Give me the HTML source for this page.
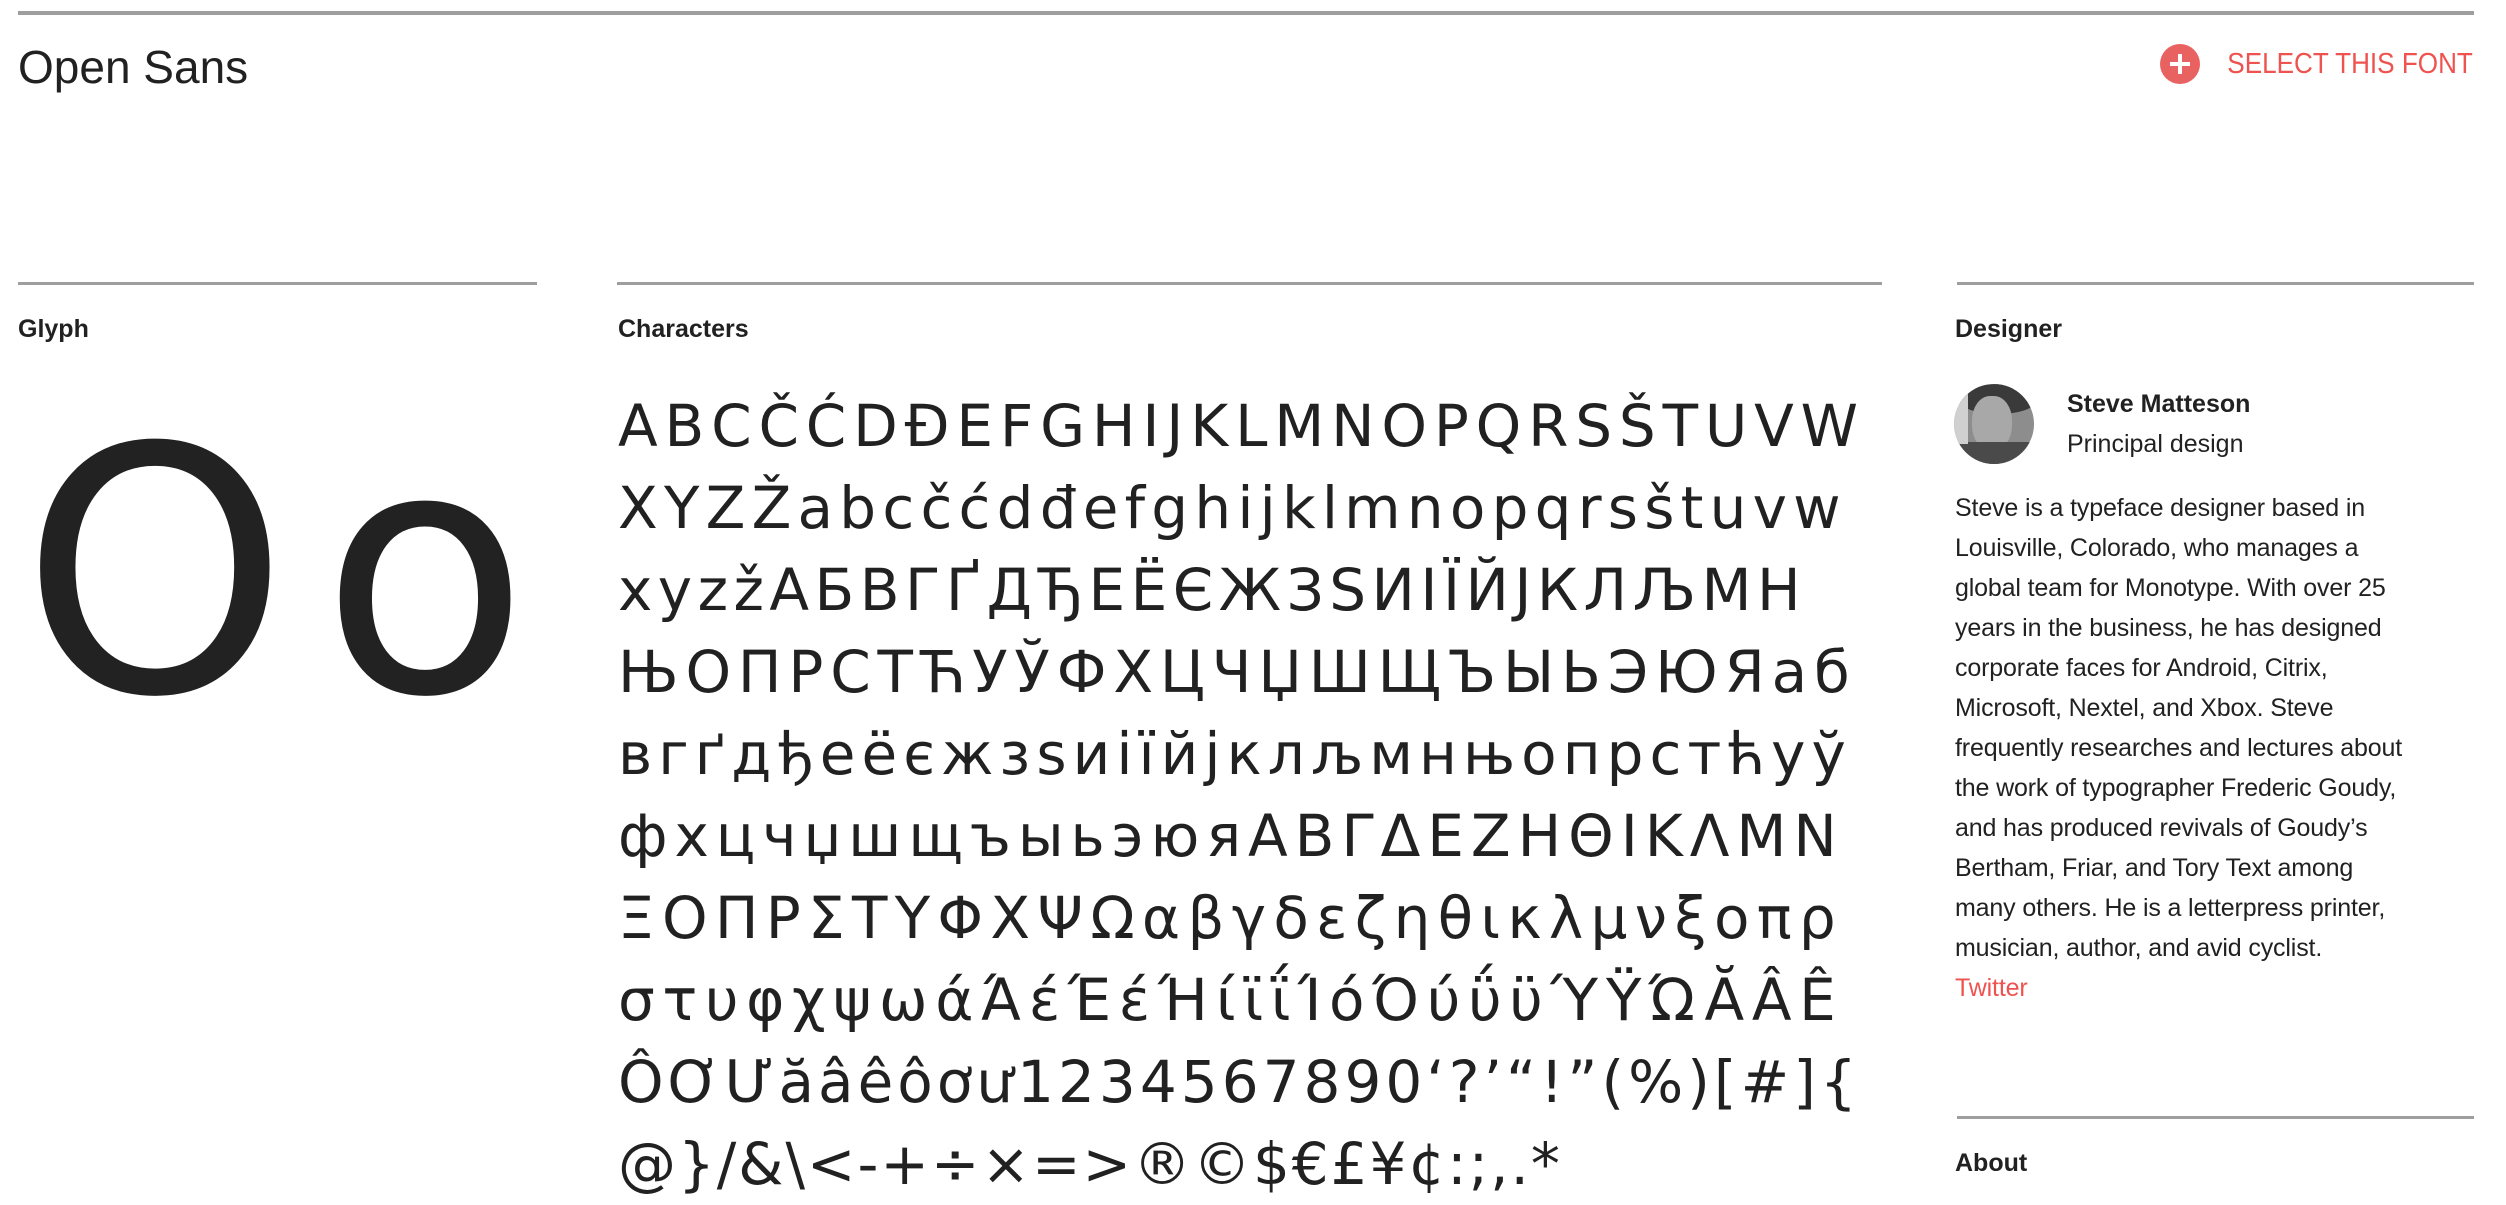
<!DOCTYPE html>
<html><head><meta charset="utf-8">
<style>
html,body{margin:0;padding:0;background:#fff;}
body{width:2506px;height:1202px;position:relative;overflow:hidden;font-family:"Liberation Sans",sans-serif;color:#212121;}
.a{position:absolute;white-space:nowrap;}
.hr{position:absolute;background:#9e9e9e;}
.lbl{font-size:25px;font-weight:bold;line-height:25px;}
.chars{position:absolute;left:618px;top:385px;font-family:"DejaVu Sans",sans-serif;font-size:58px;line-height:82px;color:#212121;}
.chars div{display:flex;justify-content:space-between;height:82px;white-space:nowrap;}
.bio{position:absolute;left:1955px;top:488px;font-size:25px;line-height:40px;white-space:nowrap;color:#212121;letter-spacing:-0.15px;}
.g{position:absolute;font-family:'DejaVu Sans',sans-serif;font-size:340px;line-height:340px;color:#222;top:404px;}
</style></head><body>
<div class="hr" style="left:18px;top:11px;width:2456px;height:4px;"></div>
<div class="a" style="left:18px;top:44px;font-size:46px;line-height:46px;">Open Sans</div>

<svg class="a" style="left:2160px;top:44px" width="40" height="40" viewBox="0 0 40 40"><circle cx="20" cy="20" r="20" fill="#e96262"/><path d="M20 10v20M10 20h20" stroke="#fff" stroke-width="4"/></svg>
<div class="a" style="right:33px;top:50px;font-size:29px;line-height:29px;color:#ef5350;transform:scaleX(0.9);transform-origin:right center;">SELECT THIS FONT</div>

<div class="hr" style="left:18px;top:282px;width:519px;height:3px;"></div>
<div class="hr" style="left:617px;top:282px;width:1265px;height:3px;"></div>
<div class="hr" style="left:1957px;top:282px;width:517px;height:3px;"></div>

<div class="a lbl" style="left:18px;top:317px;">Glyph</div>
<div class="a lbl" style="left:618px;top:317px;">Characters</div>
<div class="a lbl" style="left:1955px;top:317px;">Designer</div>

<div class="g" style="left:21px;">O</div>
<div class="g" style="left:321px;">o</div>

<div class="chars" id="chars"></div>

<div class="a" style="left:1954px;top:384px;width:80px;height:80px;border-radius:50%;overflow:hidden;background:#8d8d8d;">
<div style="position:absolute;left:4px;top:0;width:80px;height:30px;background:#3a3a3a;border-radius:50%;"></div>
<div style="position:absolute;left:18px;top:12px;width:40px;height:54px;background:#a8a8a8;border-radius:45%;"></div>
<div style="position:absolute;left:0;top:58px;width:80px;height:30px;background:#4a4a4a;"></div>
<div style="position:absolute;left:0;top:10px;width:14px;height:50px;background:#d0d0d0;"></div>
</div>
<div class="a" style="left:2067px;top:384px;font-size:25px;line-height:40px;">
<div style="font-weight:bold;">Steve Matteson</div>
<div>Principal design</div>
</div>

<div class="bio">
Steve is a typeface designer based in<br>
Louisville, Colorado, who manages a<br>
global team for Monotype. With over 25<br>
years in the business, he has designed<br>
corporate faces for Android, Citrix,<br>
Microsoft, Nextel, and Xbox. Steve<br>
frequently researches and lectures about<br>
the work of typographer Frederic Goudy,<br>
and has produced revivals of Goudy’s<br>
Bertham, Friar, and Tory Text among<br>
many others. He is a letterpress printer,<br>
musician, author, and avid cyclist.<br>
<span style="color:#ef5350;">Twitter</span>
</div>

<div class="hr" style="left:1957px;top:1116px;width:517px;height:3px;"></div>
<div class="a lbl" style="left:1955px;top:1151px;">About</div>

<script>
var lines=[
["ABCČĆDĐEFGHIJKLMNOPQRSŠTUVW",1858],
["XYZŽabcčćdđefghijklmnopqrsštuvw",1841],
["xyzžАБВГҐДЂЕЁЄЖЗЅИІЇЙЈКЛЉМН",1801],
["ЊОПРСТЋУЎФХЦЧЏШЩЪЫЬЭЮЯаб",1850],
["вгґдђеёєжзѕиіїйјклљмнњопрстћуў",1846],
["фхцчџшщъыьэюяΑΒΓΔΕΖΗΘΙΚΛΜΝ",1837],
["ΞΟΠΡΣΤΥΦΧΨΩαβγδεζηθικλμνξοπρ",1836],
["στυφχψωάΆέΈέΉίϊΐΊόΌύΰϋΎΫΏĂÂÊ",1836],
["ÔƠƯăâêôơư1234567890‘?’“!”(%)[#]{",1857],
["@}/&\\<-+÷×=>®©$€£¥¢:;,.*",1560]
];
var c=document.getElementById('chars');
lines.forEach(function(l){
  var d=document.createElement('div');
  d.style.width=(l[1]-618)+'px';
  Array.from(l[0]).forEach(function(ch){var s=document.createElement('span');s.textContent=ch;d.appendChild(s);});
  c.appendChild(d);
});
</script>
</body></html>
